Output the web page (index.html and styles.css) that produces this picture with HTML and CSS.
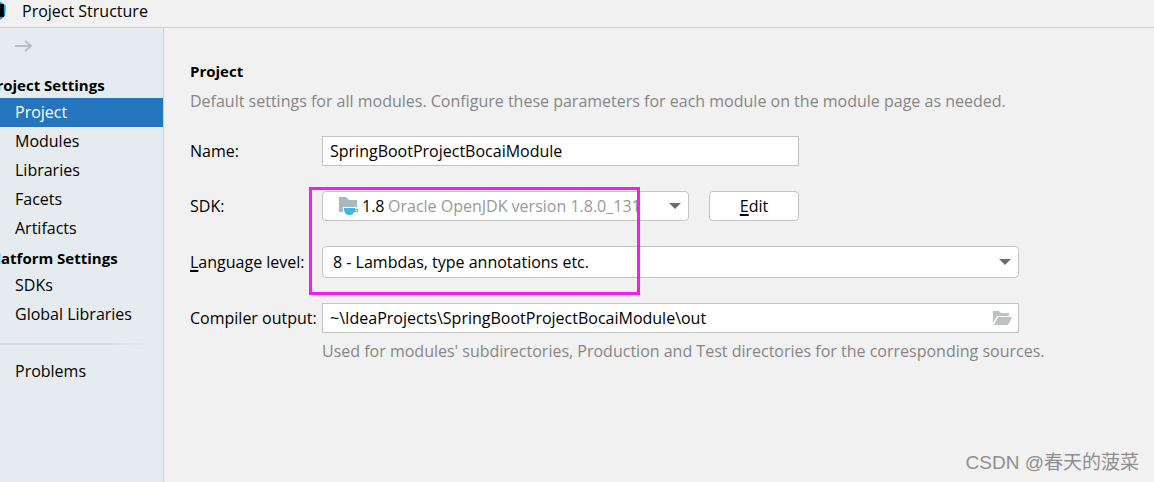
FILE: index.html
```html
<!doctype html>
<html lang="en">
<head>
    <meta charset="utf-8"/>
    <title>Project Structure</title>
    <link rel="stylesheet" href="styles.css">
</head>
<body>

    <div class="titlebar">
        <svg class="logo" width="20" height="20" viewBox="0 0 20 20">
            <path d="M3 1h11l5 4-1 10-5 4H3z" fill="#1c8cf0"/>
            <path d="M14 1l5 4-1 5-4-4z" fill="#22c3f5"/>
            <path d="M3 3h14v13H3z" fill="#000"/>
        </svg>
        <span>Project Structure</span>
    </div>

    <div class="main">
        <div class="sidebar">
            <button class="forward" type="button" aria-label="Forward">
                <svg width="18" height="14" viewBox="0 0 18 14">
                    <path d="M0 7h16M10 2l6 5-6 5" fill="none" stroke="#bcbdbe" stroke-width="2"/>
                </svg>
            </button>
            <h3>Project Settings</h3>
            <ul>
                <li><a class="current" href="#">Project</a></li>
                <li><a href="#">Modules</a></li>
                <li><a href="#">Libraries</a></li>
                <li><a href="#">Facets</a></li>
                <li><a href="#">Artifacts</a></li>
            </ul>
            <h3>Platform Settings</h3>
            <ul>
                <li><a href="#">SDKs</a></li>
                <li><a href="#">Global Libraries</a></li>
            </ul>
            <div class="line"></div>
            <ul>
                <li><a href="#">Problems</a></li>
            </ul>
        </div>

        <div class="content">
            <h2>Project</h2>
            <p class="desc">Default settings for all modules. Configure these parameters for each module on the module page as needed.</p>

            <form class="form">
                <label for="name">Name:</label>
                <input class="text short" id="name" type="text" value="SpringBootProjectBocaiModule"/>

                <label for="sdk">SDK:</label>
                <div class="short sdk-row">
                    <div class="combo">
                        <select id="sdk" class="sdk">
                            <option>Oracle OpenJDK version 1.8.0_131</option>
                        </select>
                        <span class="sdk-name">
                            <svg width="20" height="18" viewBox="0 0 20 18">
                                <path d="M0 0h7l3 3h8v7H4v5H0z" fill="#adb7be"/>
                                <path d="M5 11h11v1h3v3h-4q-1 3-4 3h-1q-4 0-5-5z" fill="#40b6e0"/>
                                <path d="M16 13h2v1h-2z" fill="#fff"/>
                            </svg>
                            1.8
                        </span>
                        <span class="arrow"></span>
                    </div>
                    <button class="edit" type="button"><u>E</u>dit</button>
                </div>

                <label for="level"><u>L</u>anguage level:</label>
                <div class="combo">
                    <select id="level" class="level">
                        <option>8 - Lambdas, type annotations etc.</option>
                    </select>
                    <span class="arrow"></span>
                </div>

                <label for="out">Compiler output:</label>
                <div class="combo">
                    <input class="text" id="out" type="text" value="~\IdeaProjects\SpringBootProjectBocaiModule\out"/>
                    <button class="browse" type="button" aria-label="Browse">
                        <svg width="20" height="15" viewBox="0 0 20 15">
                            <path d="M0 0h6l2 2h8v3H4L0 12z" fill="#bcc1c5"/>
                            <path d="M5 6h14l-4 8H1z" fill="#bcc1c5"/>
                        </svg>
                    </button>
                </div>

                <p class="hint">Used for modules' subdirectories, Production and Test directories for the corresponding sources.</p>
                <div class="mark"></div>
            </form>
        </div>
    </div>

    <div class="watermark">CSDN @春天的菠菜</div>

</body>
</html>
```
FILE: styles.css
```css
* {
    box-sizing: border-box;
}

body, ul, li, h2, h3, p {
    margin: 0;
    padding: 0;
    list-style: none;
}

body {
    min-height: 100vh;
    display: flex;
    flex-direction: column;
    position: relative;
    overflow: hidden;
    background: #f1f1f1;
    color: #000;
    font: 16px/22px "Open Sans", "Noto Sans", "Noto Sans CJK SC", sans-serif;
}

input, select, button {
    margin: 0;
    font: inherit;
    color: inherit;
}

h2, h3 {
    font-size: 15px;
    line-height: 22px;
    font-weight: bold;
}

u {
    text-decoration-thickness: 2px;
    text-underline-offset: 2px;
}

.titlebar {
    display: flex;
    align-items: center;
    gap: 15px;
    height: 28px;
    margin-left: -13px;
    padding-bottom: 6px;
    border-bottom: 1px solid #d1d1d1;
}

.main {
    flex: 1;
    display: flex;
}

.sidebar {
    width: 164px;
    flex-shrink: 0;
    padding-top: 10px;
    border-right: 1px solid #cdd1d4;
    background: #e6ebef;
    overflow: hidden;
}

.forward {
    display: flex;
    align-items: center;
    height: 16px;
    margin: 0 0 20px 15px;
    padding: 0;
    border: 0;
    background: none;
}

.sidebar h3 {
    height: 24px;
    margin-left: -13px;
    white-space: nowrap;
}

.sidebar ul + h3 {
    height: 28px;
    padding-top: 4px;
}

.sidebar a {
    display: block;
    height: 29px;
    padding-left: 15px;
    line-height: 29px;
    color: #000;
    text-decoration: none;
    white-space: nowrap;
}

.sidebar a.current {
    background: #2675bf;
    color: #fff;
}

.line {
    height: 2px;
    margin: 14px 10px 12px 0;
    background: linear-gradient(to right, #d9dde1 70%, #e6ebef);
}

.content {
    flex: 1;
    padding: 32px 26px;
}

.desc, .hint {
    color: #868686;
    white-space: nowrap;
}

.desc {
    margin: 8px 0 24px;
}

.form {
    position: relative;
    display: grid;
    grid-template-columns: 132px minmax(0, 1fr);
    row-gap: 25px;
    align-items: center;
    max-width: 829px;
}

.form label {
    white-space: nowrap;
}

.short {
    width: 69%;
    max-width: 477px;
}

.text {
    height: 30px;
    padding: 0 7px;
    border: 1px solid #c4c4c4;
    background: #fff;
}

.sdk-row {
    display: flex;
    gap: 20px;
}

.combo {
    flex: 1;
    display: grid;
    align-items: center;
}

.combo > * {
    grid-area: 1 / 1;
}

.combo select {
    height: 32px;
    border: 1px solid #c4c4c4;
    border-radius: 4px;
    background: #fff;
    appearance: none;
}

.combo .sdk {
    height: 30px;
    padding: 0 32px 0 65px;
    color: #999;
}

.combo .level {
    padding: 0 32px 0 10px;
}

.sdk-name {
    display: flex;
    align-items: center;
    gap: 3px;
    padding-left: 17px;
    pointer-events: none;
}

.arrow {
    justify-self: end;
    margin-right: 8px;
    border: 6px solid transparent;
    border-top-color: #6e6e6e;
    border-bottom: 0;
    pointer-events: none;
}

.edit {
    width: 90px;
    height: 30px;
    border: 1px solid #c4c4c4;
    border-radius: 4px;
    background: #fff;
}

.browse {
    justify-self: end;
    display: flex;
    margin-right: 6px;
    padding: 0;
    border: 0;
    background: none;
}

.hint {
    grid-column: 2;
    margin-top: -18px;
}

.mark {
    position: absolute;
    left: 119px;
    top: 51px;
    width: 331px;
    height: 108px;
    border: 3px solid #f41cf4;
    pointer-events: none;
}

.watermark {
    position: absolute;
    right: 15px;
    bottom: 6px;
    color: #8f8f8f;
    font: 19px/26px "Liberation Sans", "Noto Sans CJK SC", sans-serif;
}
```
